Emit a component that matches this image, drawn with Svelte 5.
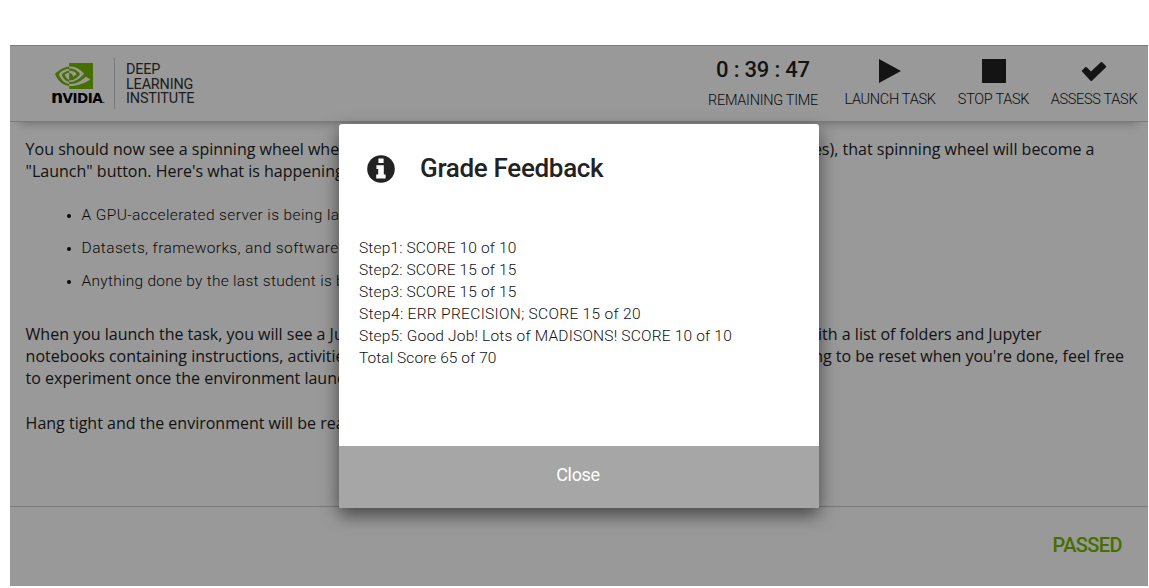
<script>
  const tasks = [
    { label: 'LAUNCH TASK', icon: 'play' },
    { label: 'STOP TASK', icon: 'stop' },
    { label: 'ASSESS TASK', icon: 'check' },
  ];
  const bullets = [
    'A GPU-accelerated server is being la',
    'Datasets, frameworks, and software',
    'Anything done by the last student is b',
  ];
  const results = [
    'Step1: SCORE 10 of 10',
    'Step2: SCORE 15 of 15',
    'Step3: SCORE 15 of 15',
    'Step4: ERR PRECISION; SCORE 15 of 20',
    'Step5: Good Job! Lots of MADISONS! SCORE 10 of 10',
    'Total Score 65 of 70',
  ];
</script>

<div class="page">
  <div class="panel">
    <header>
      <div class="logo">
        <div class="brand">
          <svg class="eye" viewBox="0 4.063 24 15.874" width="38" height="26" preserveAspectRatio="none">
            <path d="M8.948 8.798v-1.43a6.7 6.7 0 0 1 .424-.018c3.922-.124 6.493 3.374 6.493 3.374s-2.774 3.851-5.75 3.851c-.398 0-.787-.062-1.158-.185v-4.346c1.528.185 1.837.857 2.747 2.385l2.04-1.714s-1.492-1.952-4-1.952a6.016 6.016 0 0 0-.796.035m0-4.735v2.138l.424-.027c5.45-.185 9.01 4.47 9.01 4.47s-4.08 4.964-8.33 4.964c-.37 0-.733-.035-1.095-.097v1.325c.3.035.61.062.91.062 3.957 0 6.82-2.023 9.593-4.408.459.371 2.34 1.263 2.73 1.652-2.633 2.208-8.772 3.984-12.253 3.984-.335 0-.653-.018-.971-.053v1.864H24V4.063zm0 10.326v1.131c-3.657-.654-4.673-4.46-4.673-4.46s1.758-1.944 4.673-2.262v1.237H8.94c-1.528-.186-2.73 1.245-2.73 1.245s.68 2.412 2.739 3.11M2.456 10.9s2.164-3.197 6.5-3.533V6.201C4.153 6.59 0 10.653 0 10.653s2.35 6.802 8.948 7.42v-1.237c-4.84-.6-6.492-5.936-6.492-5.936z" fill="#76b900" />
          </svg>
          <span class="word"><span class="n">n</span>VIDIA<span class="dot">.</span></span>
        </div>
        <div class="institute"><span>DEEP</span><span>LEARNING</span><span>INSTITUTE</span></div>
      </div>
      <div class="timer">
        <strong>0 : 39 : 47</strong>
        <span>REMAINING TIME</span>
      </div>
      {#each tasks as task}
        <div class="task {task.icon}">
          <svg width="26" height="26" viewBox="0 0 26 26" fill="#222">
            {#if task.icon === 'play'}
              <path d="M2 1L24 13L2 25z" />
            {:else if task.icon === 'stop'}
              <path d="M1 1H25V25H1z" />
            {:else}
              <path d="M1 13.6Q.5 13 1 12.4L4.2 9.3Q5 8.7 5.7 9.3L10 13.5L19.8 4.3Q20.5 3.7 21.2 4.3L25 8Q25.5 8.7 25 9.3L11 22.8Q10.2 23.4 9.5 22.8z" />
            {/if}
          </svg>
          <span>{task.label}</span>
        </div>
      {/each}
    </header>

    <main>
      <p class="row r1"><span>You should now see a spinning wheel whe</span><span>es), that spinning wheel will become a</span></p>
      <p class="row">"Launch" button. Here's what is happening</p>
      <ul>
        {#each bullets as b, i}<li class="b{i}">{b}</li>{/each}
      </ul>
      <p class="row r3"><span>When you launch the task, you will see a Ju</span><span>ith a list of folders and Jupyter</span></p>
      <p class="row r4"><span>notebooks containing instructions, activitie</span><span>ng to be reset when you're done, feel free</span></p>
      <p class="row">to experiment once the environment launc</p>
      <p class="row last">Hang tight and the environment will be rea</p>
    </main>

    <footer>PASSED</footer>
    <div class="shade"></div>
  </div>

  <div class="dialog">
    <div class="title">
      <svg width="28" height="28" viewBox="0 0 28 28">
        <circle cx="14" cy="14" r="13.8" fill="#222" />
        <path d="M11.4 3.4H16.6V8H11.4zM9.4 10.3H16.8V19.6H18.6V23.4H9.2V19.6H11.2V14H9.4z" fill="#fff" />
      </svg>
      <h2>Grade Feedback</h2>
    </div>
    <div class="results">
      {#each results as r, i}<div class="s{i}">{r}</div>{/each}
    </div>
    <button>Close</button>
  </div>
</div>

<style>
  :global(body) { background: #fff; overflow: hidden; }
  .page { box-sizing: border-box; width: 1149px; height: 588px; padding: 45px 1px 2px 10px; font-family: Roboto, sans-serif; color: #222; position: relative; }
  .panel { position: relative; height: 541px; display: flex; flex-direction: column; background: #fff; overflow: hidden; }
  header { box-sizing: border-box; flex: none; height: 77px; border-top: 1px solid #ccc; border-bottom: 1px solid #ccc; display: flex; padding-left: 41px; box-shadow: 0 10px 10px -10px rgba(0, 0, 0, .35); }
  .logo { display: flex; width: 657px; }
  .brand { width: 63px; display: flex; flex-direction: column; padding-top: 17px; }
  .eye { margin-left: 4px; flex: none; }
  .word { font: 700 13.5px/14px "DejaVu Sans", sans-serif; color: #000; margin-top: 2px; white-space: nowrap; letter-spacing: -.5px; }
  .n { font-size: 17px; line-height: 10px; }
  .dot { font-size: 9px; font-weight: 400; }
  .institute { border-left: 1px solid #ccc; margin-top: 12px; height: 51px; padding: 5px 0 0 11px; box-sizing: border-box; display: flex; flex-direction: column; font-size: 14.4px; line-height: 14.7px; letter-spacing: -.15px; color: #333; }
  .timer, .task { display: flex; flex-direction: column; align-items: center; white-space: nowrap; font-weight: 300; font-size: 14.5px; line-height: 18px; letter-spacing: -.3px; color: #111; }
  .timer { width: 110px; padding-top: 12px; }
  .timer strong { font-weight: 500; font-size: 22px; line-height: 24px; margin-bottom: 10px; letter-spacing: -.2px; color: #222; }
  .task { padding-top: 12px; }
  .task svg { margin-bottom: 7px; }
  .play { margin-left: 26px; width: 92px; }
  .stop { margin-left: 22px; width: 71px; }
  .check { margin-left: 21px; width: 88px; }
  main { height: 385px; box-sizing: border-box; padding: 16px 24px 0 15.6px; border-bottom: 1px solid #ccc; }
  .row { margin: 0; font: 400 16px/22px "Open Sans", sans-serif; display: flex; justify-content: space-between; white-space: nowrap; }
  .r1 { padding-right: 29.5px; }
  .r3 { padding-right: 82.5px; }
  .last { margin-top: 23px; }
  ul { margin: 22px 0 31px; padding-left: 56px; font-size: 15.5px; line-height: 22px; font-weight: 300; letter-spacing: .38px; color: #111; }
  li { margin-bottom: 11px; white-space: nowrap; }
  li::marker { font-size: 13px; }
  .b2 { letter-spacing: .26px; }
  footer { text-align: right; padding: 25px 26px 0 0; font-size: 20px; line-height: 26px; font-weight: 500; color: #76b900; letter-spacing: -.6px; }
  .shade { position: absolute; inset: 0; background: rgba(0, 0, 0, .4); }
  .dialog { position: absolute; left: 339px; top: 124px; width: 480px; height: 384px; display: flex; flex-direction: column; background: #fff; border-radius: 3px; overflow: hidden; box-shadow: 0 7px 18px rgba(0, 0, 0, .55); }
  .title { display: flex; padding: 31px 0 0 28px; height: 82px; gap: 25px; }
  h2 { margin: -4px 0 0; font-size: 26px; line-height: 34px; font-weight: 500; letter-spacing: -.32px; }
  .results { flex: 1; padding-left: 20px; font-size: 15.5px; line-height: 22px; font-weight: 300; white-space: nowrap; letter-spacing: .15px; color: #111; }
  .s3 { letter-spacing: .31px; }
  .s4 { letter-spacing: .19px; }
  .s5 { letter-spacing: .06px; }
  button { border: 0; height: 62px; padding: 0 2px 5px 0; background: #a6a6a6; color: #fff; font: 400 18px Roboto, sans-serif; letter-spacing: -.3px; }
</style>
